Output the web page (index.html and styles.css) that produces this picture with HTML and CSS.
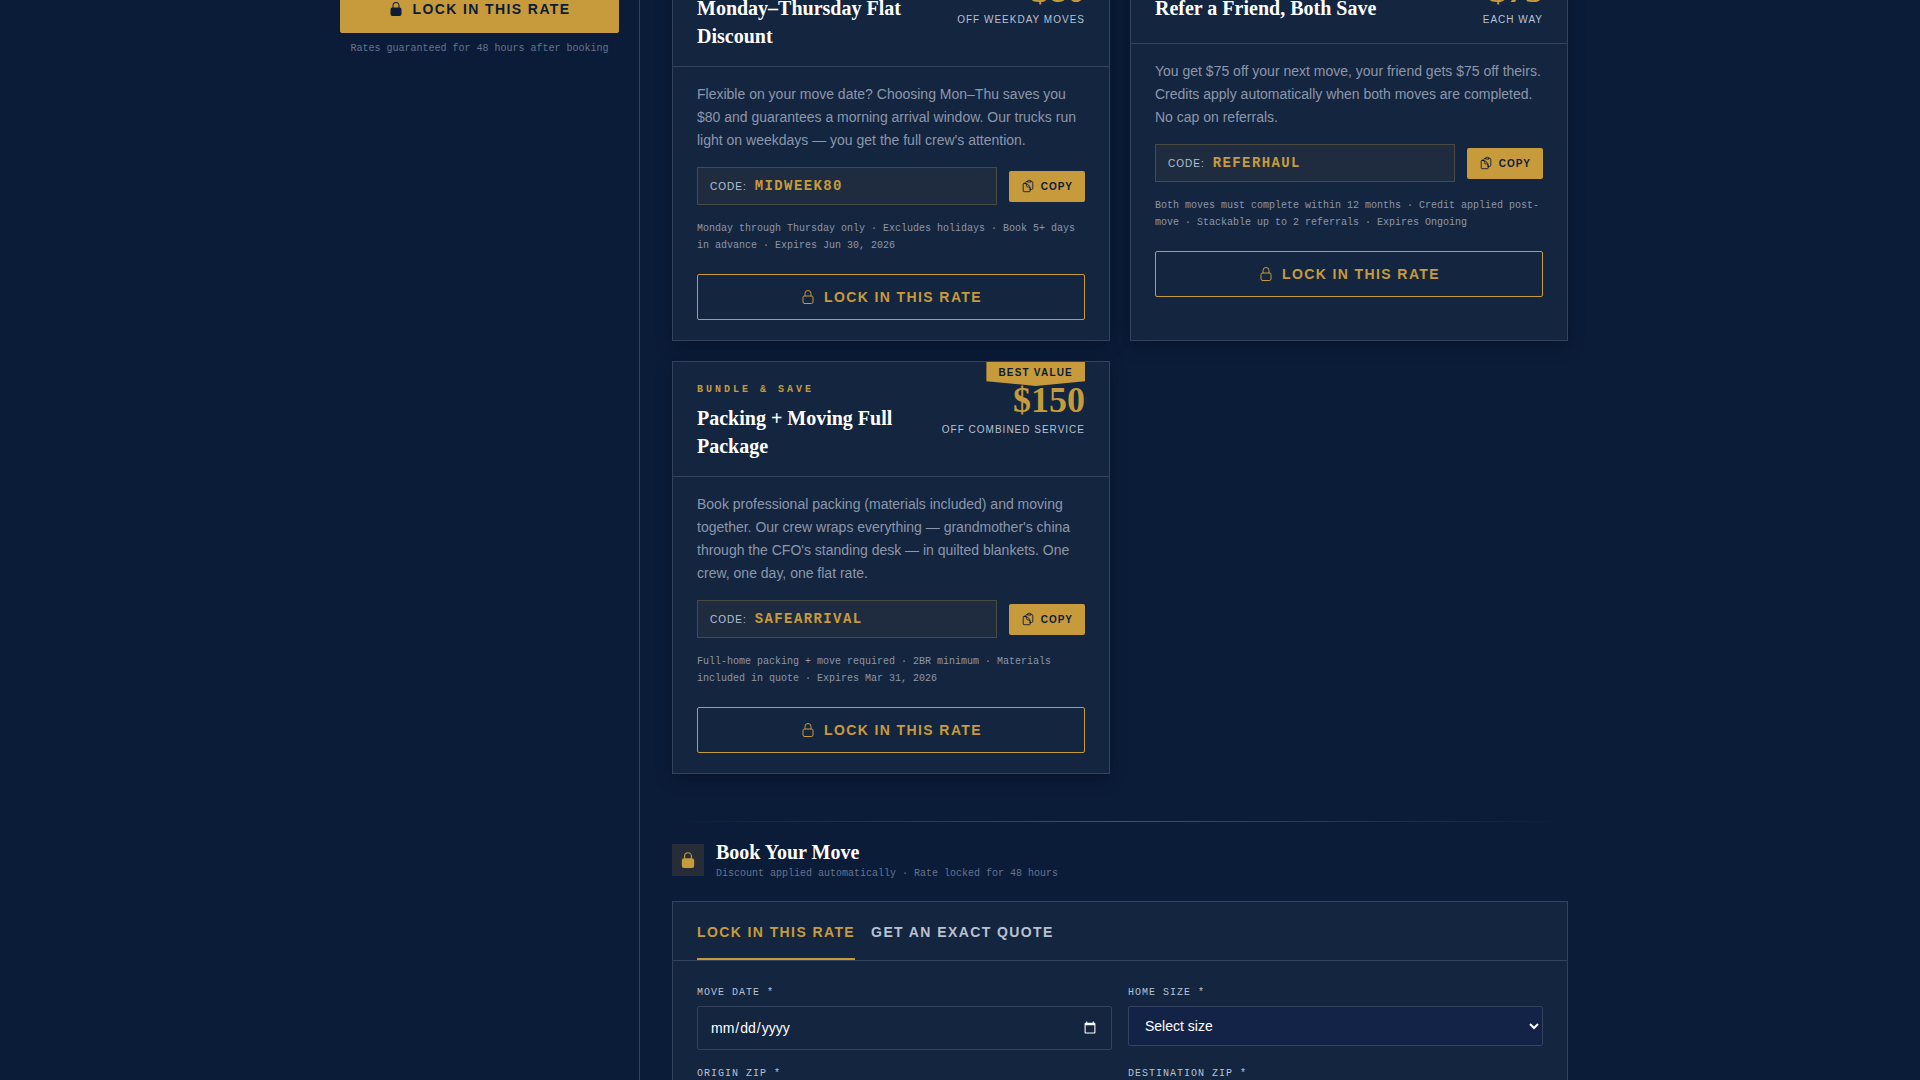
FILE: index.html
```html
<!DOCTYPE html>
<html lang="en">
<head>
    <meta charset="UTF-8">
    <meta name="viewport" content="width=device-width, initial-scale=1.0">
    <title>Offers</title>
    <link rel="stylesheet" href="styles.css">
</head>
<body>
    <!-- Icon sprite -->
    <svg class="sprite" aria-hidden="true">
        <symbol id="icon-lock" viewBox="0 0 24 24">
            <path fill="none" stroke="currentColor" stroke-width="1.5" stroke-linecap="round" stroke-linejoin="round" d="M16.5 10.5V6.75a4.5 4.5 0 1 0-9 0v3.75m-.75 11.25h10.5a2.25 2.25 0 0 0 2.25-2.25v-6.75a2.25 2.25 0 0 0-2.25-2.25H6.75a2.25 2.25 0 0 0-2.25 2.25v6.75a2.25 2.25 0 0 0 2.25 2.25Z"/>
        </symbol>
        <symbol id="icon-lock-fill" viewBox="0 0 24 24">
            <path fill-rule="evenodd" d="M12 1.5a5.25 5.25 0 0 0-5.25 5.25v3a3 3 0 0 0-3 3v6.75a3 3 0 0 0 3 3h10.5a3 3 0 0 0 3-3v-6.75a3 3 0 0 0-3-3v-3c0-2.9-2.35-5.25-5.25-5.25Zm3.75 8.25v-3a3.75 3.75 0 1 0-7.5 0v3h7.5Z"/>
        </symbol>
        <symbol id="icon-copy" viewBox="0 0 24 24">
            <path fill="none" stroke="currentColor" stroke-width="1.5" stroke-linecap="round" stroke-linejoin="round" d="M8.25 7.5V6.108c0-1.135.845-2.098 1.976-2.192.373-.03.748-.057 1.123-.08M15.75 18H18a2.25 2.25 0 0 0 2.25-2.25V6.108c0-1.135-.845-2.098-1.976-2.192a48.424 48.424 0 0 0-1.123-.08M15.75 18.75v-1.875a3.375 3.375 0 0 0-3.375-3.375h-1.5a1.125 1.125 0 0 1-1.125-1.125v-1.5A3.375 3.375 0 0 0 6.375 7.5H5.25m11.9-3.664A2.251 2.251 0 0 0 15 2.25h-1.5a2.251 2.251 0 0 0-2.15 1.586m5.8 0c.065.21.1.433.1.664v.75h-6V4.5c0-.231.035-.454.1-.664M6.75 7.5H4.875c-.621 0-1.125.504-1.125 1.125v12c0 .621.504 1.125 1.125 1.125h9.75c.621 0 1.125-.504 1.125-1.125V16.5a9 9 0 0 0-9-9Z"/>
        </symbol>
    </svg>

    <div class="page">
        <aside class="sidebar">
            <button type="button" class="btn btn-solid">
                <svg class="icon"><use href="#icon-lock-fill"/></svg>
                LOCK IN THIS RATE
            </button>
            <p class="sidebar-note">Rates guaranteed for 48 hours after booking</p>
        </aside>

        <main class="content">
            <div class="offers">
                <article class="offer">
                    <header class="offer-head">
                        <div>
                            <div class="offer-tag"></div>
                            <h3 class="title">Monday–Thursday Flat Discount</h3>
                        </div>
                        <div class="offer-price">
                            <div class="amount">$80</div>
                            <div class="unit">OFF WEEKDAY MOVES</div>
                        </div>
                    </header>
                    <div class="offer-body">
                        <p class="offer-text">Flexible on your move date? Choosing Mon–Thu saves you $80 and guarantees a morning arrival window. Our trucks run light on weekdays — you get the full crew's attention.</p>
                        <div class="code-row">
                            <div class="code-box"><span class="code-label">CODE:</span><span class="code">MIDWEEK80</span></div>
                            <button type="button" class="copy-btn"><svg class="icon-sm"><use href="#icon-copy"/></svg>COPY</button>
                        </div>
                        <p class="terms">Monday through Thursday only · Excludes holidays · Book 5+ days in advance · Expires Jun 30, 2026</p>
                        <button type="button" class="btn btn-outline">
                            <svg class="icon"><use href="#icon-lock"/></svg>
                            LOCK IN THIS RATE
                        </button>
                    </div>
                </article>

                <article class="offer">
                    <header class="offer-head">
                        <div>
                            <div class="offer-tag"></div>
                            <h3 class="title">Refer a Friend, Both Save</h3>
                        </div>
                        <div class="offer-price">
                            <div class="amount">$75</div>
                            <div class="unit">EACH WAY</div>
                        </div>
                    </header>
                    <div class="offer-body">
                        <p class="offer-text">You get $75 off your next move, your friend gets $75 off theirs. Credits apply automatically when both moves are completed. No cap on referrals.</p>
                        <div class="code-row">
                            <div class="code-box"><span class="code-label">CODE:</span><span class="code">REFERHAUL</span></div>
                            <button type="button" class="copy-btn"><svg class="icon-sm"><use href="#icon-copy"/></svg>COPY</button>
                        </div>
                        <p class="terms">Both moves must complete within 12 months · Credit applied post-move · Stackable up to 2 referrals · Expires Ongoing</p>
                        <button type="button" class="btn btn-outline">
                            <svg class="icon"><use href="#icon-lock"/></svg>
                            LOCK IN THIS RATE
                        </button>
                    </div>
                </article>

                <article class="offer">
                    <span class="ribbon">BEST VALUE</span>
                    <header class="offer-head">
                        <div>
                            <div class="offer-tag">BUNDLE &amp; SAVE</div>
                            <h3 class="title">Packing + Moving Full Package</h3>
                        </div>
                        <div class="offer-price">
                            <div class="amount">$150</div>
                            <div class="unit">OFF COMBINED SERVICE</div>
                        </div>
                    </header>
                    <div class="offer-body">
                        <p class="offer-text">Book professional packing (materials included) and moving together. Our crew wraps everything — grandmother's china through the CFO's standing desk — in quilted blankets. One crew, one day, one flat rate.</p>
                        <div class="code-row">
                            <div class="code-box"><span class="code-label">CODE:</span><span class="code">SAFEARRIVAL</span></div>
                            <button type="button" class="copy-btn"><svg class="icon-sm"><use href="#icon-copy"/></svg>COPY</button>
                        </div>
                        <p class="terms">Full-home packing + move required · 2BR minimum · Materials included in quote · Expires Mar 31, 2026</p>
                        <button type="button" class="btn btn-outline">
                            <svg class="icon"><use href="#icon-lock"/></svg>
                            LOCK IN THIS RATE
                        </button>
                    </div>
                </article>
            </div>

            <div class="divider"></div>

            <section>
                <div class="section-head">
                    <div class="section-icon"><svg class="icon-lg"><use href="#icon-lock-fill"/></svg></div>
                    <div>
                        <h2 class="title">Book Your Move</h2>
                        <p class="section-sub">Discount applied automatically · Rate locked for 48 hours</p>
                    </div>
                </div>

                <div class="booking">
                    <div class="tabs">
                        <button type="button" class="tab active">LOCK IN THIS RATE</button>
                        <button type="button" class="tab">GET AN EXACT QUOTE</button>
                    </div>
                    <form class="form-grid">
                        <div class="field">
                            <label for="moveDate">MOVE DATE *</label>
                            <input type="date" id="moveDate">
                        </div>
                        <div class="field">
                            <label for="homeSize">HOME SIZE *</label>
                            <select id="homeSize">
                                <option value="">Select size</option>
                            </select>
                        </div>
                        <div class="field">
                            <label for="originZip">ORIGIN ZIP *</label>
                            <input type="text" id="originZip">
                        </div>
                        <div class="field">
                            <label for="destinationZip">DESTINATION ZIP *</label>
                            <input type="text" id="destinationZip">
                        </div>
                    </form>
                </div>
            </section>
        </main>
    </div>
</body>
</html>
```

FILE: styles.css
```css
:root {
    --navy: #0b1c39;
    --panel: #142540;
    --line: #33435d;
    --gold: #c79b3b;
    --white: #ffffff;
    --silver: #b8c2d2;
    --muted: #8c97aa;
    --dim: #66738b;
    --sans: "Liberation Sans", Arial, sans-serif;
    --serif: "Liberation Serif", Georgia, serif;
    --mono: "Liberation Mono", "Courier New", monospace;
}

* {
    box-sizing: border-box;
    margin: 0;
    padding: 0;
}

body {
    height: 100vh;
    overflow: hidden;
    background: var(--navy);
    color: var(--white);
    font-family: var(--sans);
    font-size: 14px;
}

button {
    font-family: inherit;
    cursor: pointer;
}

.sprite {
    display: none;
}

.page {
    display: flex;
    max-width: 1280px;
    margin: -49px auto 0;
}

.sidebar {
    flex: 0 0 320px;
    padding: 34px 20px 0;
    border-right: 1px solid var(--line);
}

.sidebar-note {
    margin-top: 8px;
    font: 10px/15px var(--mono);
    color: var(--dim);
    text-align: center;
}

.content {
    flex: 1;
    min-width: 0;
    padding: 0 32px 32px;
}

/* Buttons */
.btn {
    display: flex;
    align-items: center;
    justify-content: center;
    gap: 8px;
    width: 100%;
    padding: 14px;
    border: 1px solid var(--gold);
    border-radius: 2px;
    font-size: 14px;
    font-weight: 700;
    line-height: 16px;
    letter-spacing: 0.1em;
}

.btn-solid {
    padding: 15px;
    background: var(--gold);
    color: var(--navy);
}

.btn-outline {
    background: transparent;
    color: var(--gold);
}

.icon {
    width: 16px;
    height: 16px;
    fill: currentColor;
}

.icon-sm {
    width: 14px;
    height: 14px;
    fill: currentColor;
}

.icon-lg {
    width: 18px;
    height: 18px;
    fill: currentColor;
}

/* Offer cards */
.offers {
    display: grid;
    grid-template-columns: repeat(2, 1fr);
    gap: 20px;
}

.offer {
    position: relative;
    background: var(--panel);
    border: 1px solid var(--line);
    box-shadow: 0 4px 16px rgba(0, 0, 0, 0.3);
}

.offer-head {
    display: flex;
    justify-content: space-between;
    gap: 16px;
    padding: 20px 24px 16px;
    border-bottom: 1px solid var(--line);
}

.offer-tag {
    min-height: 16px;
    margin-bottom: 6px;
    font: 700 10px/16px var(--mono);
    letter-spacing: 3px;
    color: var(--gold);
}

.title {
    font: 700 20px/28px var(--serif);
}

.offer-price {
    flex-shrink: 0;
    text-align: right;
}

.amount {
    font: 700 36px/36px var(--serif);
    color: var(--gold);
}

.unit {
    margin-top: 4px;
    font-size: 10px;
    line-height: 15px;
    letter-spacing: 1px;
    color: var(--silver);
}

.ribbon {
    position: absolute;
    top: 0;
    right: 24px;
    padding: 5px 12px 7px;
    background: var(--gold);
    clip-path: polygon(0 0, 100% 0, 100% 80%, 50% 100%, 0 80%);
    color: var(--navy);
    font-size: 10px;
    font-weight: 700;
    line-height: 12px;
    letter-spacing: 0.12em;
}

.offer-body {
    padding: 16px 24px 20px;
}

.offer-text {
    margin-bottom: 15px;
    line-height: 23px;
    color: var(--muted);
}

.code-row {
    display: flex;
    align-items: center;
    gap: 12px;
}

.code-box {
    flex: 1;
    display: flex;
    align-items: center;
    gap: 8px;
    height: 38px;
    padding: 0 12px;
    background: #1f2c40;
    border: 1px solid #4a4a40;
}

.code-label {
    font-size: 10px;
    letter-spacing: 1px;
    color: var(--silver);
}

.code {
    font: 700 14px/18px var(--mono);
    letter-spacing: 0.1em;
    color: var(--gold);
}

.copy-btn {
    display: flex;
    align-items: center;
    gap: 6px;
    padding: 8px 12px;
    background: var(--gold);
    border: 0;
    border-radius: 2px;
    color: var(--navy);
    font-size: 10px;
    font-weight: 700;
    line-height: 15px;
    letter-spacing: 1px;
}

.terms {
    margin: 15px 0 20px;
    font: 10px/17px var(--mono);
    color: var(--muted);
}

/* Booking */
.divider {
    height: 1px;
    margin: 47px 0 16px;
    background: linear-gradient(90deg, transparent, rgba(199, 155, 59, 0.4), transparent);
}

.section-head {
    display: flex;
    align-items: center;
    gap: 12px;
    margin-bottom: 20px;
}

.section-icon {
    display: flex;
    align-items: center;
    justify-content: center;
    width: 32px;
    height: 32px;
    background: #262d38;
    color: var(--gold);
}

.section-sub {
    font: 10px/15px var(--mono);
    color: var(--dim);
}

.booking {
    background: var(--panel);
    border: 1px solid var(--line);
}

.tabs {
    display: flex;
    gap: 16px;
    padding: 4px 24px 0;
    border-bottom: 1px solid var(--line);
}

.tab {
    padding: 16px 0;
    background: none;
    border: 0;
    border-bottom: 2px solid transparent;
    color: var(--silver);
    font-size: 14px;
    font-weight: 700;
    line-height: 20px;
    letter-spacing: 0.1em;
}

.tab.active {
    color: var(--gold);
    border-bottom-color: var(--gold);
}

.form-grid {
    display: grid;
    grid-template-columns: repeat(2, 1fr);
    gap: 16px;
    padding: 24px;
}

.field {
    display: flex;
    flex-direction: column;
    gap: 6px;
}

.field label {
    font: 10px/15px var(--mono);
    letter-spacing: 1px;
    color: var(--silver);
}

.field input,
.field select {
    width: 100%;
    height: 44px;
    padding: 10px 12px;
    background: transparent;
    border: 1px solid var(--line);
    border-radius: 2px;
    color: var(--white);
    color-scheme: dark;
    font: 14px var(--sans);
}

.field select {
    height: 40px;
    background: #122347;
}
```
